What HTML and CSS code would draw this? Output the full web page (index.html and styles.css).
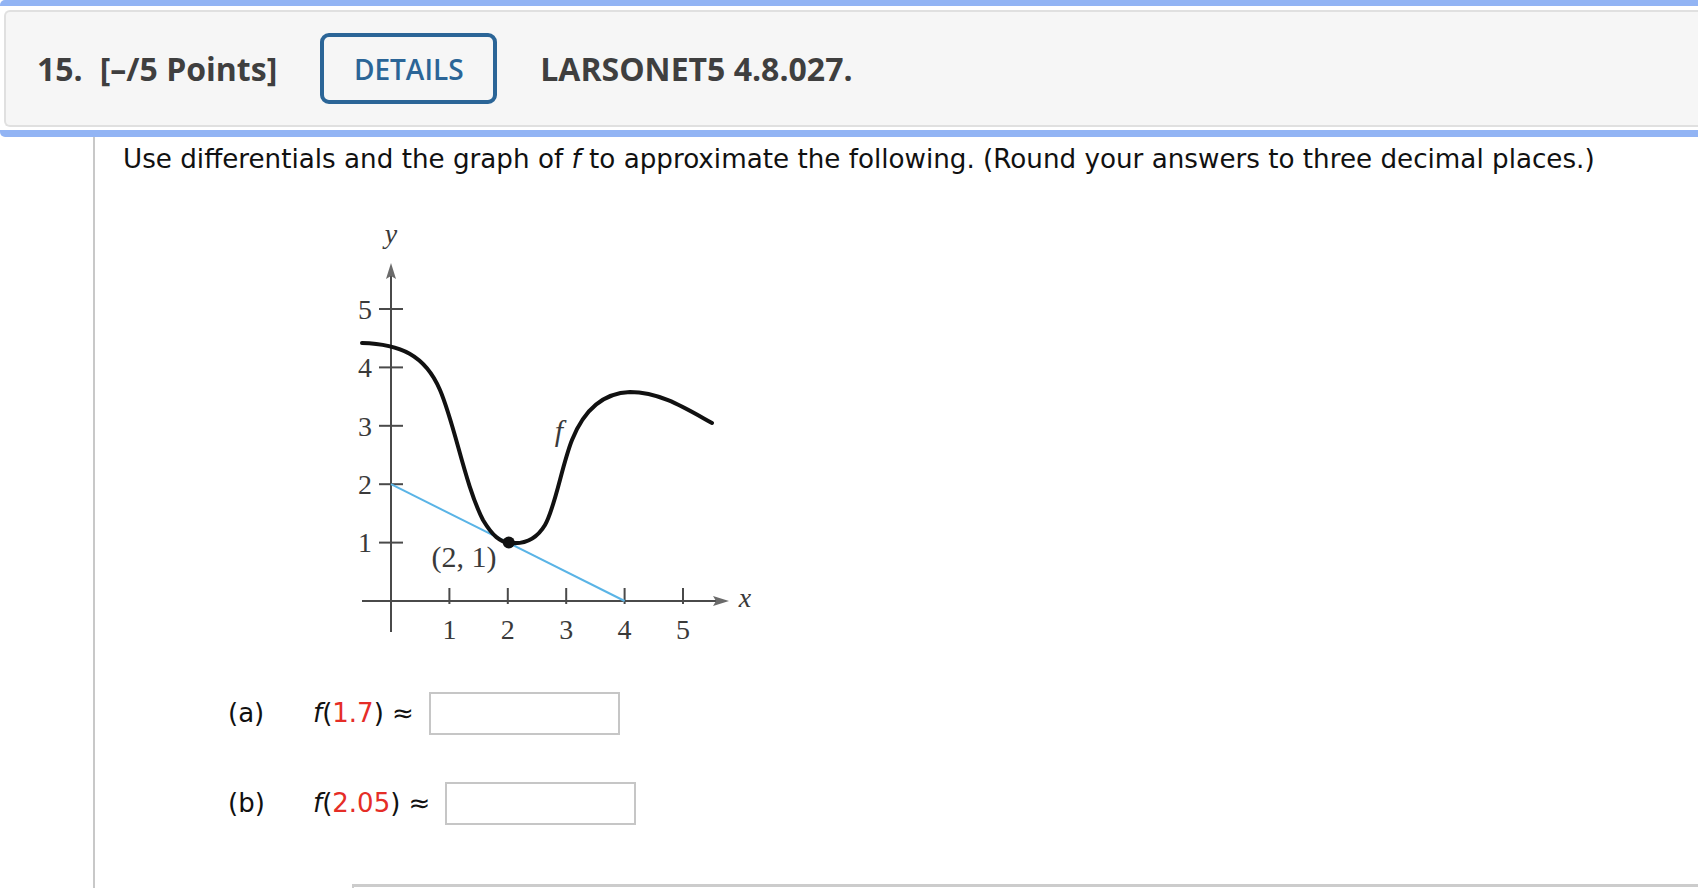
FILE: index.html
```html
<!DOCTYPE html>
<html>
<head>
<meta charset="utf-8">
<link rel="stylesheet" href="styles.css">
</head>
<body>
<div class="qhead">
  <div class="qbar">
    <span class="qnum">15.</span>
    <span class="qpts">[–/5 Points]</span>
    <span class="details">DETAILS</span>
    <span class="qref">LARSONET5 4.8.027.</span>
  </div>
</div>
<div class="qbody">
  <p class="prompt">Use differentials and the graph of <i>f</i> to approximate the following. (Round your answers to three decimal places.)</p>
  <div class="figure">
    <svg width="420" height="442" viewBox="0 0 420 442" xmlns="http://www.w3.org/2000/svg">
      <g transform="translate(0,12)">
      <g stroke="#4a4a4a" stroke-width="2" fill="none">
        <line x1="51" y1="52" x2="51" y2="412"/>
        <line x1="22" y1="381" x2="380" y2="381"/>
        <line x1="39" y1="322.6" x2="63" y2="322.6"/>
        <line x1="39" y1="264.2" x2="63" y2="264.2"/>
        <line x1="39" y1="205.8" x2="63" y2="205.8"/>
        <line x1="39" y1="147.4" x2="63" y2="147.4"/>
        <line x1="39" y1="89" x2="63" y2="89"/>
        <line x1="109.4" y1="368" x2="109.4" y2="384"/>
        <line x1="167.8" y1="368" x2="167.8" y2="384"/>
        <line x1="226.2" y1="368" x2="226.2" y2="384"/>
        <line x1="284.6" y1="368" x2="284.6" y2="384"/>
        <line x1="343" y1="368" x2="343" y2="384"/>
      </g>
      <polygon points="51,43 46,59 51,56 56,59" fill="#6a6a6a"/>
      <polygon points="389,381 373,376 376,381 373,386" fill="#6a6a6a"/>
      <line x1="51" y1="264.2" x2="284.6" y2="381" stroke="#5ab4e6" stroke-width="2"/>
      <path d="M22,123 C60,124 85,135 100,170 C115,205 125,265 143,300 C152,315 160,323 172,323 C185,324 196,320 205,305 C215,288 222,245 232,220 C244,190 262,173 290,172 C320,172 345,188 372,203" stroke="#111" stroke-width="4" fill="none" stroke-linecap="round"/>
      <circle cx="168.8" cy="322.6" r="6" fill="#111"/>
      <g font-family="'Liberation Serif', 'DejaVu Serif', serif" font-size="28" fill="#3a3a3a" text-anchor="middle">
        <text x="25" y="98.5">5</text>
        <text x="25" y="157">4</text>
        <text x="25" y="215.5">3</text>
        <text x="25" y="274">2</text>
        <text x="25" y="332">1</text>
        <text x="109.4" y="419">1</text>
        <text x="167.8" y="419">2</text>
        <text x="226.2" y="419">3</text>
        <text x="284.6" y="419">4</text>
        <text x="343" y="419">5</text>
        <text x="124" y="347" font-size="30">(2, 1)</text>
        <text x="51" y="23" font-style="italic">y</text>
        <text x="405" y="387" font-style="italic">x</text>
        <text x="219" y="221" font-style="italic" font-size="30">f</text>
      </g>
      </g>
    </svg>
  </div>
  <div class="part part-a">
    <span class="plabel">(a)</span>
    <span class="expr"><i>f</i>(<span class="red">1.7</span>) ≈</span>
    <span class="answer"></span>
  </div>
  <div class="part part-b">
    <span class="plabel">(b)</span>
    <span class="expr"><i>f</i>(<span class="red">2.05</span>) ≈</span>
    <span class="answer"></span>
  </div>
  <div class="nextbox"></div>
</div>
</body>
</html>
```
FILE: styles.css
```css
html, body {
  margin: 0;
  padding: 0;
  background: #fff;
  overflow: hidden;
}
body {
  width: 1698px;
  height: 888px;
  font-family: "DejaVu Sans", Verdana, sans-serif;
  color: #111;
}
.qhead {
  border-top: 6px solid #92b4f4;
  border-bottom: 7px solid #92b4f4;
  border-radius: 5px 0 0 5px;
  padding: 4px 0 3px 4px;
}
.qbar {
  height: 113px;
  background: #f6f6f6;
  border: 2px solid #e0e0e0;
  border-right: none;
  border-radius: 6px 0 0 6px;
  display: flex;
  align-items: center;
  padding-left: 31px;
  font-family: "Open Sans", sans-serif;
  font-weight: 700;
  font-size: 32px;
  color: #3f3f3f;
}
.qnum {
  margin-right: 17px;
}
.details {
  margin-left: 43px;
  width: 177px;
  height: 71px;
  box-sizing: border-box;
  border: 4px solid #2b6597;
  border-radius: 9px;
  display: flex;
  align-items: center;
  justify-content: center;
  font-weight: 600;
  font-size: 28px;
  color: #2b6597;
}
.qref {
  margin-left: 43px;
}
.qbody {
  margin-left: 93px;
  border-left: 2px solid #c8c8c8;
  padding-left: 28px;
  padding-top: 4px;
  height: 760px;
}
.prompt {
  margin: 0;
  font-size: 26.2px;
  line-height: 36px;
}
.figure {
  margin-top: 31px;
  margin-left: 217px;
  height: 442px;
}
.figure svg {
  display: block;
}
.part {
  display: flex;
  align-items: center;
  height: 42px;
  padding-left: 105px;
  font-size: 26px;
}
.part-a {
  margin-top: 42px;
}
.part-b {
  margin-top: 48px;
}
.plabel {
  width: 85px;
}
.red {
  color: #e52d27;
}
.answer {
  margin-left: 15px;
  width: 191px;
  height: 43px;
  box-sizing: border-box;
  border: 2px solid #c6c6c6;
  background: #fff;
}
.nextbox {
  margin-top: 60px;
  margin-left: 229px;
  height: 40px;
  border-top: 3px solid #cccccc;
  border-left: 2px solid #cccccc;
}
```
